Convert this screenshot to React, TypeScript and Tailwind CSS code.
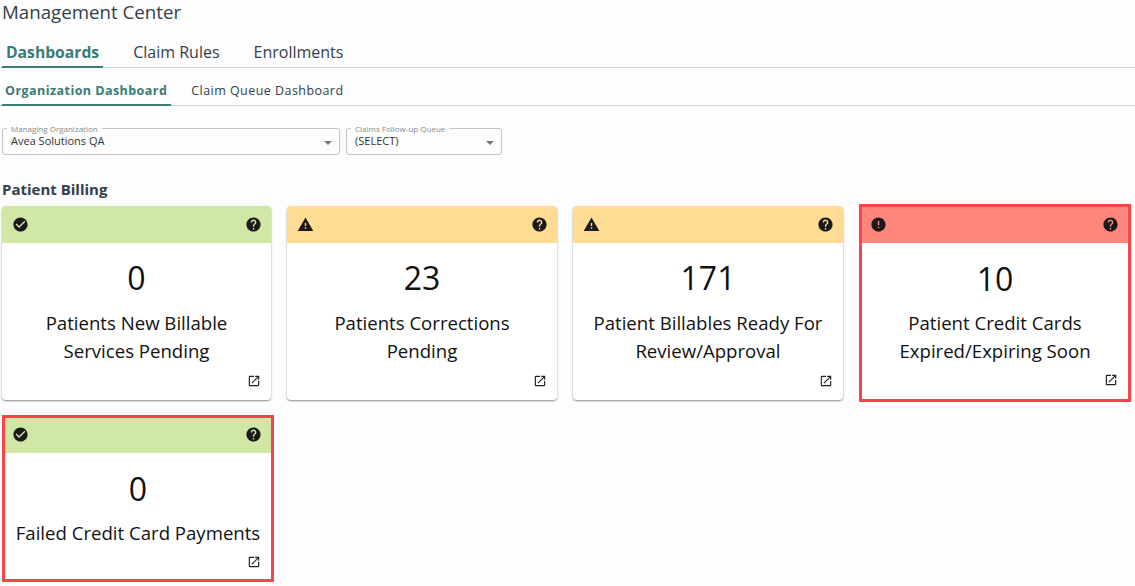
import { MdCheckCircle, MdError, MdHelp, MdOpenInNew, MdWarning } from "react-icons/md";

const font = "font-['Open_Sans',sans-serif]";

type Status = "ok" | "warn" | "bad";

const headerBg: Record<Status, string> = {
  ok: "bg-[#d1e7a5]",
  warn: "bg-[#ffdb94]",
  bad: "bg-[#ff867c]",
};

function StatusIcon({ status }: { status: Status }) {
  if (status === "ok") return <MdCheckCircle size={17} className="text-[#1a1a1a]" />;
  if (status === "warn") return <MdWarning size={17} className="text-[#1a1a1a]" />;
  return <MdError size={17} className="text-[#1a1a1a]" />;
}

function Card({ status, count, label }: { status: Status; count: string; label: string[] }) {
  return (
    <div className="flex h-[194px] flex-col rounded-[4px] bg-white shadow-[0_1px_2px_rgba(0,0,0,0.45)]">
      <div className={`flex h-[37px] items-center justify-between rounded-t-[4px] pl-[10px] pr-[9px] ${headerBg[status]}`}>
        <StatusIcon status={status} />
        <MdHelp size={17} className="text-[#1a1a1a]" />
      </div>
      <CardBody count={count} label={label} />
    </div>
  );
}

function AlertCard({ status, count, label, short }: { status: Status; count: string; label: string[]; short?: boolean }) {
  return (
    <div className={`flex flex-col border-[3px] border-[#f94449] bg-white ${short ? "h-[167px] w-[272px]" : "-my-[2px] h-[198px]"}`}>
      <div className={`flex items-center justify-between pb-[2px] pr-[9px] ${short ? "h-[35px] pl-[7px]" : "h-[36px] pl-[8px]"} ${headerBg[status]}`}>
        <StatusIcon status={status} />
        <MdHelp size={17} className="text-[#1a1a1a]" />
      </div>
      <CardBody alert count={count} label={label} />
    </div>
  );
}

function CardBody({ count, label, alert }: { count: string; label: string[]; alert?: boolean }) {
  return (
    <div className={`relative flex flex-1 flex-col items-center text-[#111] ${alert ? "pt-[15px]" : "pt-[14px]"}`}>
      <div className="text-[32px] leading-[41px]">{count}</div>
      <div className={`text-center text-[18.6px] leading-[28px] ${alert ? "mt-[10px]" : "mt-[11px]"}`}>
        {label.map((line) => (
          <div key={line}>{line}</div>
        ))}
      </div>
      <MdOpenInNew size={14} className={`absolute right-[10px] ${label.length === 1 ? "bottom-[10px]" : "bottom-[12px]"} text-[#222]`} />
    </div>
  );
}

function Select({ legend, value, width }: { legend: string; value: string; width: string }) {
  return (
    <div className={`relative flex h-[27px] items-center rounded-[3px] border border-[#c4c4c4] pl-[8px] text-[11px] text-[#333] ${width}`}>
      <span className="absolute left-[4px] top-[-6px] bg-[#fdfdfd] px-[4px] text-[8px] leading-[11px] text-[#8a8a8a]">{legend}</span>
      {value}
      <span className="absolute right-[7px] top-[12px] h-0 w-0 border-x-[4px] border-t-[4px] border-x-transparent border-t-[#777]" />
    </div>
  );
}

export default function App() {
  return (
    <div className={`${font} h-[586px] w-[1135px] overflow-hidden bg-[#fdfdfd] text-[#33404a]`}>
      <h1 className="pl-[2px] text-[18.72px] leading-[24px]">Management Center</h1>

      <nav className="mt-[16px] flex h-[28px] items-start border-b border-[#cfd4d6] pl-[2px] text-[16px] leading-[24px]">
        <a className="h-[28px] border-b-2 border-[#3a7a77] px-[4px] text-[15.7px] font-bold text-[#3a7a77]">Dashboards</a>
        <a className="ml-[30px]">Claim Rules</a>
        <a className="ml-[34px]">Enrollments</a>
      </nav>

      <nav className="mt-[9px] flex h-[29px] items-start border-b border-[#cfd4d6] pl-[2px] text-[12.5px] leading-[28px] tracking-[0.45px]">
        <a className="h-[29px] border-b-2 border-[#3a7a77] pl-[3px] pr-[4px] font-bold text-[#3a7a77]">Organization Dashboard</a>
        <a className="ml-[20px]">Claim Queue Dashboard</a>
      </nav>

      <div className="ml-[2px] mt-[22px] flex gap-[6px]">
        <Select legend="Managing Organization" value="Avea Solutions QA" width="w-[338px]" />
        <Select legend="Claims Follow-up Queue" value="(SELECT)" width="w-[156px]" />
      </div>

      <h2 className="ml-[2px] mt-[23px] text-[15px] font-bold leading-[22px]">Patient Billing</h2>

      <div className="ml-[2px] mt-[6px] grid grid-cols-[269px_270px_270px_272px] gap-x-4 gap-y-[15px]">
        <Card status="ok" count="0" label={["Patients New Billable", "Services Pending"]} />
        <Card status="warn" count="23" label={["Patients Corrections", "Pending"]} />
        <Card status="warn" count="171" label={["Patient Billables Ready For", "Review/Approval"]} />
        <AlertCard status="bad" count="10" label={["Patient Credit Cards", "Expired/Expiring Soon"]} />
        <AlertCard short status="ok" count="0" label={["Failed Credit Card Payments"]} />
      </div>
    </div>
  );
}
